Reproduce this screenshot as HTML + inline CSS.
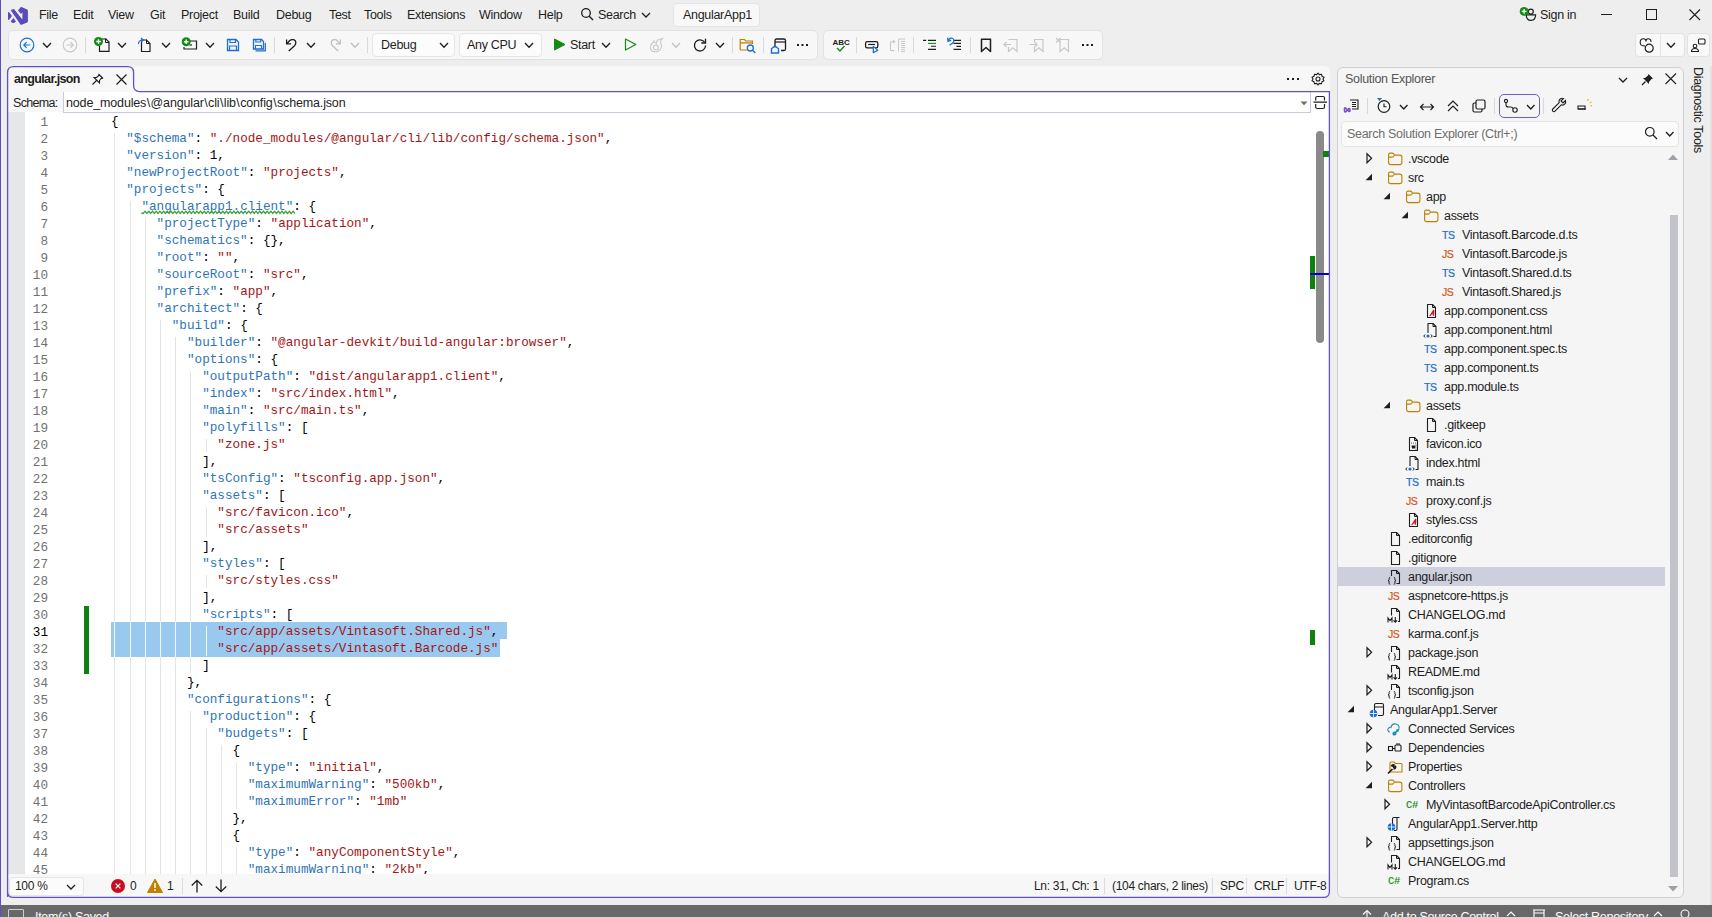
<!DOCTYPE html><html><head><meta charset="utf-8"><style>
*{box-sizing:border-box;margin:0;padding:0}
html,body{width:1712px;height:917px;overflow:hidden;background:#eeeeee;font-family:"Liberation Sans",sans-serif;color:#1e1e1e;position:relative}
.abs{position:absolute}
.t{position:absolute;white-space:pre;font-size:12.5px;line-height:16px;letter-spacing:-0.3px}
.k{color:#2e75b6}.s{color:#a31515}
.ln{position:absolute;text-align:right;font-family:"Liberation Mono",monospace;font-size:12.67px;line-height:17px;color:#717171;white-space:pre}
.cl{position:absolute;font-family:"Liberation Mono",monospace;font-size:12.67px;line-height:17px;white-space:pre;color:#000}
.tb{position:absolute;background:#f7f7f7;border:1px solid #e2e2e2;border-radius:5px}
svg{position:absolute;overflow:visible;z-index:4}
</style></head><body>

<svg style="left:0px;top:0px;width:30px;height:30px" viewBox="0 0 30 30"><path d="M10.6 10.0 L14.0 8.9 L22.3 19.5 L22.5 12.2 L21.0 14.0 L18.0 10.4 L21.0 6.8 L27.2 9.5 Q27.9 9.9 27.9 10.7 L27.9 21.5 Q27.9 22.2 27.2 22.5 L21.5 24.8 Q20.8 25 20.4 24.4 Z M8.0 12.3 L9.0 11.9 L11.9 16.0 L9.0 20.1 L8.0 19.8 Z M10.6 21.6 L13.4 17.9 L16.0 21.6 L13.9 22.9 L12.6 23 Z" fill="#5a4bbd"/></svg>
<div class="t" style="left:39px;top:7px">File</div>
<div class="t" style="left:73px;top:7px">Edit</div>
<div class="t" style="left:108px;top:7px">View</div>
<div class="t" style="left:150px;top:7px">Git</div>
<div class="t" style="left:181px;top:7px">Project</div>
<div class="t" style="left:233px;top:7px">Build</div>
<div class="t" style="left:276px;top:7px">Debug</div>
<div class="t" style="left:329px;top:7px">Test</div>
<div class="t" style="left:364px;top:7px">Tools</div>
<div class="t" style="left:407px;top:7px">Extensions</div>
<div class="t" style="left:479px;top:7px">Window</div>
<div class="t" style="left:538px;top:7px">Help</div>
<svg style="left:580px;top:7px;width:14px;height:14px" viewBox="0 0 14 14"><circle cx="6" cy="6" r="4.3" fill="none" stroke="#1e1e1e" stroke-width="1.3"/><path d="M9.2 9.2 L13 13" stroke="#1e1e1e" stroke-width="1.4"/></svg>
<div class="t" style="left:598px;top:7px">Search</div>
<svg style="left:641.0px;top:12.0px;width:10px;height:6px" viewBox="0 0 10 6"><path d="M1 1 L5.0 5 L9 1" fill="none" stroke="#1e1e1e" stroke-width="1.3"/></svg>
<div class="abs" style="left:673px;top:3px;width:87px;height:24px;background:#f8f8f8;border:1px solid #e4e4e4;border-radius:4px"></div>
<div class="t" style="left:683px;top:7px">AngularApp1</div>
<svg style="left:1518px;top:6px;width:20px;height:18px" viewBox="0 0 20 18"><circle cx="12.8" cy="5.6" r="2.5" fill="none" stroke="#1e1e1e" stroke-width="1.2"/><path d="M8.2 8.8 H17.6 C17.6 12.6 15.6 14.4 12.9 14.4 C10.2 14.4 8.2 12.6 8.2 8.8 Z" fill="none" stroke="#1e1e1e" stroke-width="1.2"/><circle cx="6.1" cy="5.4" r="4.4" fill="#138a13"/><path d="M6.1 3 V7.8 M3.7 5.4 H8.5" stroke="#fff" stroke-width="1.3"/></svg>
<div class="t" style="left:1540px;top:7px">Sign in</div>
<div class="abs" style="left:1601px;top:14px;width:11px;height:1px;background:#1e1e1e"></div>
<div class="abs" style="left:1646px;top:9px;width:11px;height:11px;border:1px solid #1e1e1e"></div>
<svg style="left:1689px;top:9px;width:12px;height:12px" viewBox="0 0 12 12"><path d="M0.5 0.5 L11 11 M11 0.5 L0.5 11" stroke="#1e1e1e" stroke-width="1.1"/></svg>
<div class="tb" style="left:8px;top:30px;width:810px;height:30px"></div>
<div class="tb" style="left:823px;top:30px;width:280px;height:30px"></div>
<svg style="left:19px;top:37px;width:16px;height:16px" viewBox="0 0 16 16"><circle cx="8" cy="8" r="6.8" fill="none" stroke="#1a6fd0" stroke-width="1.2"/><path d="M4.8 8 H11.2 M7.6 5.2 L4.8 8 L7.6 10.8" fill="none" stroke="#1a6fd0" stroke-width="1.2"/></svg>
<svg style="left:42.0px;top:42.4px;width:10px;height:6.2px" viewBox="0 0 10 6.2"><path d="M1 1 L5.0 5.2 L9 1" fill="none" stroke="#1e1e1e" stroke-width="1.3"/></svg>
<svg style="left:62px;top:37px;width:16px;height:16px" viewBox="0 0 16 16"><circle cx="8" cy="8" r="6.8" fill="none" stroke="#c9c9c9" stroke-width="1.2"/><path d="M4.8 8 H11.2 M8.4 5.2 L11.2 8 L8.4 10.8" fill="none" stroke="#c9c9c9" stroke-width="1.2"/></svg>
<div class="abs" style="left:85px;top:37px;width:1px;height:16px;background:#dadada"></div>
<svg style="left:93px;top:37px;width:18px;height:16px" viewBox="0 0 18 16"><path d="M6.5 2 H13 L16 5 V14.3 H6.5 V9" fill="none" stroke="#1e1e1e" stroke-width="1.2"/><path d="M12.5 1.5 V5.5 H16" fill="none" stroke="#1e1e1e" stroke-width="1"/><circle cx="5.5" cy="4.5" r="4.5" fill="#138a13"/><path d="M5.5 2.2 V6.8 M3.2 4.5 H7.8" stroke="#fff" stroke-width="1.4"/></svg>
<svg style="left:117.0px;top:42.4px;width:10px;height:6.2px" viewBox="0 0 10 6.2"><path d="M1 1 L5.0 5.2 L9 1" fill="none" stroke="#1e1e1e" stroke-width="1.3"/></svg>
<svg style="left:136px;top:37px;width:18px;height:16px" viewBox="0 0 18 16"><path d="M5.5 3 H10.5 L14 6.5 V14.5 H5.5 Z" fill="none" stroke="#1e1e1e" stroke-width="1.2"/><path d="M10.5 2.5 V6.5 H14" fill="none" stroke="#1e1e1e" stroke-width="1"/><path d="M2.5 7 C2.5 4 4 3 7 3 M5 1 L7.3 3 L5 5" fill="none" stroke="#1a6fd0" stroke-width="1.2"/></svg>
<svg style="left:161.0px;top:42.4px;width:10px;height:6.2px" viewBox="0 0 10 6.2"><path d="M1 1 L5.0 5.2 L9 1" fill="none" stroke="#1e1e1e" stroke-width="1.3"/></svg>
<svg style="left:180px;top:37px;width:20px;height:16px" viewBox="0 0 20 16"><path d="M8 4 H16.5 V12 H4 V10" fill="none" stroke="#1e1e1e" stroke-width="1.2"/><path d="M9.5 8 H12" stroke="#1e1e1e" stroke-width="1.2"/><circle cx="6.2" cy="4.7" r="4.5" fill="#138a13"/><path d="M6.2 2.4 V7 M3.9 4.7 H8.5" stroke="#fff" stroke-width="1.4"/></svg>
<svg style="left:205.0px;top:42.4px;width:10px;height:6.2px" viewBox="0 0 10 6.2"><path d="M1 1 L5.0 5.2 L9 1" fill="none" stroke="#1e1e1e" stroke-width="1.3"/></svg>
<svg style="left:226px;top:38px;width:14px;height:14px" viewBox="0 0 14 14"><path d="M1.5 1.5 H10 L12.5 4 V12.5 H1.5 Z" fill="none" stroke="#1a6fd0" stroke-width="1.3"/><path d="M4 1.5 V4.5 H9.5 V1.5 M3.5 12.5 V8 H10.5 V12.5" fill="none" stroke="#1a6fd0" stroke-width="1.2"/></svg>
<svg style="left:252px;top:38px;width:15px;height:14px" viewBox="0 0 15 14"><path d="M1.5 1.5 H9.5 L11.5 3.5 V11 H1.5 Z" fill="none" stroke="#1a6fd0" stroke-width="1.3"/><path d="M3.8 1.5 V4 H8.8 V1.5 M3.5 11 V7.5 H9.5 V11" fill="none" stroke="#1a6fd0" stroke-width="1.1"/><path d="M13.3 5 V12.8 H3.5" fill="none" stroke="#1a6fd0" stroke-width="1.2"/></svg>
<div class="abs" style="left:274px;top:37px;width:1px;height:16px;background:#dadada"></div>
<svg style="left:285px;top:38px;width:13px;height:13px" viewBox="0 0 13 13"><path d="M1.6 1.5 V5.9 H6" fill="none" stroke="#1e1e1e" stroke-width="1.3"/><path d="M1.8 5.8 L4.5 2.8 C6.5 0.8 10.8 1.2 10.8 4.8 C10.8 6.2 10.3 7 9.5 7.8 L3.8 13" fill="none" stroke="#1e1e1e" stroke-width="1.3"/></svg>
<svg style="left:306.0px;top:42.4px;width:10px;height:6.2px" viewBox="0 0 10 6.2"><path d="M1 1 L5.0 5.2 L9 1" fill="none" stroke="#1e1e1e" stroke-width="1.3"/></svg>
<svg style="left:329px;top:38px;width:13px;height:13px" viewBox="0 0 13 13"><path d="M11.4 1.5 V5.9 H7" fill="none" stroke="#bdbdbd" stroke-width="1.2"/><path d="M11.2 5.8 L8.5 2.8 C6.5 0.8 2.2 1.2 2.2 4.8 C2.2 6.2 2.7 7 3.5 7.8 L9.2 13" fill="none" stroke="#bdbdbd" stroke-width="1.2"/></svg>
<svg style="left:350.0px;top:42.4px;width:10px;height:6.2px" viewBox="0 0 10 6.2"><path d="M1 1 L5.0 5.2 L9 1" fill="none" stroke="#bdbdbd" stroke-width="1.3"/></svg>
<div class="abs" style="left:367px;top:37px;width:1px;height:16px;background:#dadada"></div>
<div class="abs" style="left:372px;top:33px;width:83px;height:24px;background:#fcfcfc;border:1px solid #e6e6e6;border-radius:4px"></div>
<div class="t" style="left:381px;top:37px">Debug</div>
<svg style="left:439.0px;top:42.4px;width:10px;height:6.2px" viewBox="0 0 10 6.2"><path d="M1 1 L5.0 5.2 L9 1" fill="none" stroke="#1e1e1e" stroke-width="1.3"/></svg>
<div class="abs" style="left:459px;top:33px;width:83px;height:24px;background:#fcfcfc;border:1px solid #e6e6e6;border-radius:4px"></div>
<div class="t" style="left:467px;top:37px">Any CPU</div>
<svg style="left:524.0px;top:42.4px;width:10px;height:6.2px" viewBox="0 0 10 6.2"><path d="M1 1 L5.0 5.2 L9 1" fill="none" stroke="#1e1e1e" stroke-width="1.3"/></svg>
<svg style="left:553px;top:38px;width:13px;height:13px" viewBox="0 0 13 13"><path d="M1.5 1 L12 6.5 L1.5 12 Z" fill="#138a13" stroke="#138a13" stroke-width="1" stroke-linejoin="round"/></svg>
<div class="t" style="left:570px;top:37px">Start</div>
<svg style="left:601.0px;top:42.4px;width:10px;height:6.2px" viewBox="0 0 10 6.2"><path d="M1 1 L5.0 5.2 L9 1" fill="none" stroke="#1e1e1e" stroke-width="1.3"/></svg>
<svg style="left:624px;top:38px;width:13px;height:13px" viewBox="0 0 13 13"><path d="M1.5 1 L11.8 6.5 L1.5 12 Z" fill="none" stroke="#138a13" stroke-width="1.2" stroke-linejoin="round"/></svg>
<svg style="left:649px;top:37px;width:16px;height:16px" viewBox="0 0 16 16"><path d="M13.5 1.5 C9 2 7 4 7.5 6.5 C5.5 5.5 5 4.5 5 4 C3 6 1.5 8 1.5 10.5 C1.5 13 3.5 14.8 6.5 14.8 C10 14.8 12.5 12 12.5 9 C12.5 6.5 10.5 5 12 3 Z" fill="none" stroke="#c8c8c8" stroke-width="1.1"/><circle cx="7" cy="10.5" r="2.5" fill="none" stroke="#c8c8c8" stroke-width="1.1"/></svg>
<svg style="left:671.0px;top:42.4px;width:10px;height:6.2px" viewBox="0 0 10 6.2"><path d="M1 1 L5.0 5.2 L9 1" fill="none" stroke="#c0c0c0" stroke-width="1.3"/></svg>
<svg style="left:692px;top:37px;width:16px;height:16px" viewBox="0 0 16 16"><path d="M12.8 5.5 A5.6 5.6 0 1 0 13.6 8.5" fill="none" stroke="#1e1e1e" stroke-width="1.3"/><path d="M13.5 1.8 V6 H9.3" fill="none" stroke="#1e1e1e" stroke-width="1.3"/></svg>
<svg style="left:715.0px;top:42.4px;width:10px;height:6.2px" viewBox="0 0 10 6.2"><path d="M1 1 L5.0 5.2 L9 1" fill="none" stroke="#1e1e1e" stroke-width="1.3"/></svg>
<div class="abs" style="left:732px;top:37px;width:1px;height:16px;background:#dadada"></div>
<svg style="left:739px;top:37px;width:18px;height:17px" viewBox="0 0 18 17"><path d="M1.2 13 V2.5 H5.5 L7 4 H13.5 V7" fill="none" stroke="#c08000" stroke-width="1.2"/><path d="M1.2 5.8 H13.5 M1.2 13 H8" fill="none" stroke="#c08000" stroke-width="1.2"/><circle cx="11.3" cy="11" r="3" fill="#f7f7f7" stroke="#1a6fd0" stroke-width="1.3"/><path d="M13.5 13.2 L16.3 16" stroke="#1a6fd0" stroke-width="1.4"/></svg>
<div class="abs" style="left:763px;top:37px;width:1px;height:16px;background:#dadada"></div>
<svg style="left:770px;top:37px;width:17px;height:17px" viewBox="0 0 17 17"><path d="M5 10.5 V3.5 C5 2.5 5.5 2 6.5 2 H14 C15 2 15.5 2.5 15.5 3.5 V12 C15.5 13 15 13.5 14 13.5 H11" fill="none" stroke="#1e1e1e" stroke-width="1.3"/><path d="M5 5 H15.5" stroke="#1e1e1e" stroke-width="1.2"/><path d="M1.5 16 V11.8 L5 9 L8.5 11.8 V16 Z" fill="none" stroke="#1a6fd0" stroke-width="1.4"/></svg>
<svg style="left:797px;top:44px;width:12px;height:3px" viewBox="0 0 12 3"><rect x="0" y="0" width="2" height="2" fill="#1e1e1e"/><rect x="4.5" y="0" width="2" height="2" fill="#1e1e1e"/><rect x="9" y="0" width="2" height="2" fill="#1e1e1e"/></svg>
<svg style="left:832px;top:37px;width:18px;height:16px" viewBox="0 0 18 16"><text x="0.5" y="7.5" font-family="Liberation Sans" font-weight="bold" font-size="8" fill="#1e1e1e">ABC</text><path d="M5 11 L8 14 L12.5 9" fill="none" stroke="#138a13" stroke-width="1.4"/></svg>
<div class="abs" style="left:856px;top:37px;width:1px;height:16px;background:#dadada"></div>
<svg style="left:860px;top:34px;width:50px;height:22px" viewBox="0 0 50 22"><rect x="5.6" y="7.6" width="12.2" height="6.2" rx="1.6" fill="none" stroke="#1e1e1e" stroke-width="1.3"/><path d="M8.2 10.5 H15" stroke="#1e1e1e" stroke-width="1.2"/><path d="M13.3 12.4 V18.6 L17.8 16.2 Z" fill="#f7f7f7" stroke="#1a6fd0" stroke-width="1.2" stroke-linejoin="round"/><path d="M30.5 7.8 H34.5 M33 6.2 L34.8 7.8 L33 9.4 M30.5 7.8 V15.8 Q30.5 16.6 31.3 16.6 H34.5" fill="none" stroke="#c8c8c8" stroke-width="1.1"/><path d="M38.5 17.6 V5 H45 M41 7.4 H45 M41 9.4 H45 M41 11.5 H45 M41 13.6 H45 M41 15.7 H45 M41 17.7 H45" fill="none" stroke="#c8c8c8" stroke-width="1"/></svg>
<div class="abs" style="left:913px;top:37px;width:1px;height:16px;background:#dadada"></div>
<svg style="left:920px;top:36px;width:45px;height:18px" viewBox="0 0 45 18"><path d="M3 4.4 H6.2 M8 4.4 H16 M11 10.3 H16 M8 13.4 H16" stroke="#1e1e1e" stroke-width="1.1"/><path d="M8 7.4 H16" stroke="#138a13" stroke-width="1.1"/><path d="M33.5 4.4 H41 M33.5 7.4 H41 M36.5 10.4 H41 M33.5 13.4 H41" stroke="#1e1e1e" stroke-width="1.1"/><path d="M27.6 1.6 L27.9 5.2 L31.2 4.4 M28 5 C29 2.6 30.5 1.8 32 2.2 C34.5 3 34.2 5.5 33 6.8 L29.6 9.2" fill="none" stroke="#1a6fd0" stroke-width="1.2"/></svg>
<div class="abs" style="left:970px;top:37px;width:1px;height:16px;background:#dadada"></div>
<svg style="left:980px;top:38px;width:12px;height:15px" viewBox="0 0 12 15"><path d="M1.5 1.2 H10.5 V13.5 L6 9.5 L1.5 13.5 Z" fill="none" stroke="#1e1e1e" stroke-width="1.5" stroke-linejoin="round"/></svg>
<svg style="left:1003px;top:38px;width:16px;height:15px" viewBox="0 0 16 15"><path d="M5.5 1.5 H14 V13.5 L9.8 9.8 L5.5 13.5 V9" fill="none" stroke="#c8c8c8" stroke-width="1.2"/><path d="M1 6.5 H8 M3.5 4 L1 6.5 L3.5 9" fill="none" stroke="#c8c8c8" stroke-width="1.2"/></svg>
<svg style="left:1029px;top:38px;width:16px;height:15px" viewBox="0 0 16 15"><path d="M5.5 4 V1.5 H14 V13.5 L9.8 9.8 L5.5 13.5 V9" fill="none" stroke="#c8c8c8" stroke-width="1.2"/><path d="M0.5 6.5 H8 M5.5 4 L8 6.5 L5.5 9" fill="none" stroke="#c8c8c8" stroke-width="1.2"/></svg>
<svg style="left:1055px;top:37px;width:16px;height:16px" viewBox="0 0 16 16"><path d="M5 2.5 H13.5 V14.5 L9.3 10.8 L5 14.5 Z" fill="none" stroke="#c8c8c8" stroke-width="1.2"/><path d="M1 1 L5.5 5.5 M5.5 1 L1 5.5" stroke="#c8c8c8" stroke-width="1.2"/></svg>
<svg style="left:1082px;top:44px;width:12px;height:3px" viewBox="0 0 12 3"><rect x="0" y="0" width="2" height="2" fill="#1e1e1e"/><rect x="4.5" y="0" width="2" height="2" fill="#1e1e1e"/><rect x="9" y="0" width="2" height="2" fill="#1e1e1e"/></svg>
<div class="tb" style="left:1635px;top:33px;width:50px;height:24px;background:#f9f9f9;border-radius:4px"></div>
<div class="abs" style="left:1660px;top:34px;width:1px;height:22px;background:#e4e4e4"></div>
<svg style="left:1638px;top:37px;width:18px;height:17px" viewBox="0 0 18 17"><path d="M7 9 C3 9 2.2 7.8 2.2 5.5 C2.2 3.2 3.5 1.8 5.5 1.8 C7 1.8 8 2.8 8 4.5 M8 4 C8 2.5 9 1.8 10.2 1.8 C12 1.8 13 3 13 5" fill="none" stroke="#1e1e1e" stroke-width="1.1"/><circle cx="11.2" cy="11.2" r="4" fill="#f9f9f9" stroke="#1e1e1e" stroke-width="1.2"/></svg>
<svg style="left:1666.0px;top:42.4px;width:10px;height:6.2px" viewBox="0 0 10 6.2"><path d="M1 1 L5.0 5.2 L9 1" fill="none" stroke="#1e1e1e" stroke-width="1.3"/></svg>
<div class="tb" style="left:1687px;top:33px;width:23px;height:24px;background:#f9f9f9;border-radius:4px"></div>
<svg style="left:1690px;top:37px;width:17px;height:16px" viewBox="0 0 17 16"><rect x="8.5" y="2" width="6.5" height="5" rx="1" fill="none" stroke="#1e1e1e" stroke-width="1.1"/><circle cx="5" cy="9" r="1.8" fill="none" stroke="#1e1e1e" stroke-width="1.1"/><path d="M1.5 14.5 C1.5 12 3 11.5 5 11.5 C7 11.5 8.5 12 8.5 14.5 Z" fill="none" stroke="#1e1e1e" stroke-width="1.1"/></svg>
<div class="abs" style="left:7px;top:66px;width:1323px;height:832px;background:#f7f7f7;border-radius:6px"></div>
<div class="abs" style="left:7px;top:66px;width:127px;height:27px;background:#f7f7f7;border-radius:6px 6px 0 0"></div>
<svg style="left:0;top:0;width:1712px;height:917px;z-index:5;pointer-events:none" viewBox="0 0 1712 917"><path d="M7.6 897 V72.5 Q7.6 66.6 13.5 66.6 H127.7 Q133.6 66.6 133.6 72.5 V85.6 Q133.6 91.6 139.6 91.6 H1329.4 V891.5 Q1329.4 897.4 1323.5 897.4 H13.5 Q7.6 897.4 7.6 891.5" fill="none" stroke="#5f53c4" stroke-width="1.3"/></svg>
<div class="t" style="left:14px;top:71px;font-weight:bold;letter-spacing:-0.65px;z-index:4">angular.json</div>
<svg style="left:91px;top:73px;width:13px;height:13px" viewBox="0 0 13 13"><path d="M7.5 1 L12 5.5 M8.5 2 L5.5 4.5 L3 4.5 L8.5 10 L8.5 7.5 L11 4.5 M5.5 7.5 L1.5 11.5" fill="none" stroke="#1e1e1e" stroke-width="1.1"/></svg>
<svg style="left:116px;top:74px;width:11px;height:11px" viewBox="0 0 11 11"><path d="M0.5 0.5 L10.5 10.5 M10.5 0.5 L0.5 10.5" stroke="#1e1e1e" stroke-width="1.2"/></svg>
<svg style="left:1287px;top:78px;width:13px;height:3px" viewBox="0 0 13 3"><rect x="0" y="0" width="2" height="2" fill="#1e1e1e"/><rect x="5" y="0" width="2" height="2" fill="#1e1e1e"/><rect x="10" y="0" width="2" height="2" fill="#1e1e1e"/></svg>
<svg style="left:1311px;top:72px;width:14px;height:14px" viewBox="0 0 14 14"><path d="M7 1 L8.3 2.6 L10.5 2.2 L11 4.3 L13 5.3 L12 7 L13 8.7 L11 9.7 L10.5 11.8 L8.3 11.4 L7 13 L5.7 11.4 L3.5 11.8 L3 9.7 L1 8.7 L2 7 L1 5.3 L3 4.3 L3.5 2.2 L5.7 2.6 Z" fill="none" stroke="#1e1e1e" stroke-width="1.1" stroke-linejoin="round"/><circle cx="7" cy="7" r="2" fill="none" stroke="#1e1e1e" stroke-width="1.1"/></svg>
<div class="abs" style="left:8px;top:92px;width:1321px;height:21px;background:#f7f7f7"></div>
<div class="abs" style="left:1310px;top:92px;width:19px;height:21px;background:#ffffff"></div>
<div class="t" style="left:13px;top:95px;letter-spacing:-0.7px">Schema:</div>
<div class="abs" style="left:63px;top:92px;width:1247.5px;height:21px;background:#fff;border:1px solid #c9cadb;border-top:none;z-index:2"></div>
<div class="t" style="left:66px;top:95px;letter-spacing:-0.15px;z-index:3">node_modules<span style="margin:0 0.5px">\</span>@angular<span style="margin:0 0.5px">\</span>cli<span style="margin:0 0.5px">\</span>lib<span style="margin:0 0.5px">\</span>config<span style="margin:0 0.5px">\</span>schema.json</div>
<svg style="left:1300px;top:101px;width:8px;height:5px" viewBox="0 0 8 5"><path d="M0.5 0.5 H7.5 L4 4.2 Z" fill="#6e6e6e"/></svg>
<svg style="left:1313px;top:95px;width:15px;height:15px" viewBox="0 0 15 15"><path d="M2.7 5.5 V3 C2.7 2 3.2 1.5 4.2 1.5 H10 C11 1.5 11.5 2 11.5 3 V5.5 M2.7 9 V12 C2.7 13 3.2 13.5 4.2 13.5 H10 C11 13.5 11.5 13 11.5 12 V9 M0.5 7.2 H14" fill="none" stroke="#1e1e1e" stroke-width="1.2"/></svg>
<div class="abs" style="left:8px;top:112px;width:1321px;height:762px;background:#ffffff;overflow:hidden">
<div class="abs" style="left:0;top:0;width:17px;height:762px;background:#e6e7e8"></div>
<div class="abs" style="left:103.0px;top:510px;width:396.2px;height:17px;background:#99c9ef"></div>
<div class="abs" style="left:103.0px;top:527px;width:388.6px;height:18px;background:#99c9ef"></div>
<div class="abs" style="left:106.3px;top:21px;width:1px;height:489px;background:#e4e4e4"></div>
<div class="abs" style="left:106.3px;top:510px;width:1px;height:35px;background:#f4f8fc"></div>
<div class="abs" style="left:106.3px;top:545px;width:1px;height:217px;background:#e4e4e4"></div>
<div class="abs" style="left:121.5px;top:89px;width:1px;height:421px;background:#e4e4e4"></div>
<div class="abs" style="left:121.5px;top:510px;width:1px;height:35px;background:#f4f8fc"></div>
<div class="abs" style="left:121.5px;top:545px;width:1px;height:217px;background:#e4e4e4"></div>
<div class="abs" style="left:136.7px;top:106px;width:1px;height:404px;background:#e4e4e4"></div>
<div class="abs" style="left:136.7px;top:510px;width:1px;height:35px;background:#f4f8fc"></div>
<div class="abs" style="left:136.7px;top:545px;width:1px;height:217px;background:#e4e4e4"></div>
<div class="abs" style="left:151.9px;top:208px;width:1px;height:302px;background:#e4e4e4"></div>
<div class="abs" style="left:151.9px;top:510px;width:1px;height:35px;background:#f4f8fc"></div>
<div class="abs" style="left:151.9px;top:545px;width:1px;height:217px;background:#e4e4e4"></div>
<div class="abs" style="left:167.1px;top:225px;width:1px;height:285px;background:#e4e4e4"></div>
<div class="abs" style="left:167.1px;top:510px;width:1px;height:35px;background:#f4f8fc"></div>
<div class="abs" style="left:167.1px;top:545px;width:1px;height:217px;background:#e4e4e4"></div>
<div class="abs" style="left:182.3px;top:259px;width:1px;height:251px;background:#e4e4e4"></div>
<div class="abs" style="left:182.3px;top:510px;width:1px;height:35px;background:#f4f8fc"></div>
<div class="abs" style="left:182.3px;top:545px;width:1px;height:16px;background:#e4e4e4"></div>
<div class="abs" style="left:182.3px;top:599px;width:1px;height:163px;background:#e4e4e4"></div>
<div class="abs" style="left:197.5px;top:327px;width:1px;height:13px;background:#e4e4e4"></div>
<div class="abs" style="left:197.5px;top:395px;width:1px;height:30px;background:#e4e4e4"></div>
<div class="abs" style="left:197.5px;top:463px;width:1px;height:13px;background:#e4e4e4"></div>
<div class="abs" style="left:197.5px;top:514px;width:1px;height:30px;background:#f4f8fc"></div>
<div class="abs" style="left:197.5px;top:616px;width:1px;height:146px;background:#e4e4e4"></div>
<div class="abs" style="left:212.7px;top:633px;width:1px;height:129px;background:#e4e4e4"></div>
<div class="abs" style="left:227.9px;top:650px;width:1px;height:47px;background:#e4e4e4"></div>
<div class="abs" style="left:227.9px;top:735px;width:1px;height:27px;background:#e4e4e4"></div>
<div class="abs" style="left:76px;top:494px;width:5px;height:68px;background:#108010"></div>
<div class="ln" style="top:2px;left:-10px;width:50px">1</div>
<div class="cl" style="top:1px;left:103.0px">{</div>
<div class="ln" style="top:19px;left:-10px;width:50px">2</div>
<div class="cl" style="top:18px;left:103.0px">  <span class="k">&quot;$schema&quot;</span>: <span class="s">&quot;./node_modules/@angular/cli/lib/config/schema.json&quot;</span>,</div>
<div class="ln" style="top:36px;left:-10px;width:50px">3</div>
<div class="cl" style="top:35px;left:103.0px">  <span class="k">&quot;version&quot;</span>: 1,</div>
<div class="ln" style="top:53px;left:-10px;width:50px">4</div>
<div class="cl" style="top:52px;left:103.0px">  <span class="k">&quot;newProjectRoot&quot;</span>: <span class="s">&quot;projects&quot;</span>,</div>
<div class="ln" style="top:70px;left:-10px;width:50px">5</div>
<div class="cl" style="top:69px;left:103.0px">  <span class="k">&quot;projects&quot;</span>: {</div>
<div class="ln" style="top:87px;left:-10px;width:50px">6</div>
<div class="cl" style="top:86px;left:103.0px">    <span class="k">&quot;angularapp1.client&quot;</span>: {</div>
<div class="ln" style="top:104px;left:-10px;width:50px">7</div>
<div class="cl" style="top:103px;left:103.0px">      <span class="k">&quot;projectType&quot;</span>: <span class="s">&quot;application&quot;</span>,</div>
<div class="ln" style="top:121px;left:-10px;width:50px">8</div>
<div class="cl" style="top:120px;left:103.0px">      <span class="k">&quot;schematics&quot;</span>: {},</div>
<div class="ln" style="top:138px;left:-10px;width:50px">9</div>
<div class="cl" style="top:137px;left:103.0px">      <span class="k">&quot;root&quot;</span>: <span class="s">&quot;&quot;</span>,</div>
<div class="ln" style="top:155px;left:-10px;width:50px">10</div>
<div class="cl" style="top:154px;left:103.0px">      <span class="k">&quot;sourceRoot&quot;</span>: <span class="s">&quot;src&quot;</span>,</div>
<div class="ln" style="top:172px;left:-10px;width:50px">11</div>
<div class="cl" style="top:171px;left:103.0px">      <span class="k">&quot;prefix&quot;</span>: <span class="s">&quot;app&quot;</span>,</div>
<div class="ln" style="top:189px;left:-10px;width:50px">12</div>
<div class="cl" style="top:188px;left:103.0px">      <span class="k">&quot;architect&quot;</span>: {</div>
<div class="ln" style="top:206px;left:-10px;width:50px">13</div>
<div class="cl" style="top:205px;left:103.0px">        <span class="k">&quot;build&quot;</span>: {</div>
<div class="ln" style="top:223px;left:-10px;width:50px">14</div>
<div class="cl" style="top:222px;left:103.0px">          <span class="k">&quot;builder&quot;</span>: <span class="s">&quot;@angular-devkit/build-angular:browser&quot;</span>,</div>
<div class="ln" style="top:240px;left:-10px;width:50px">15</div>
<div class="cl" style="top:239px;left:103.0px">          <span class="k">&quot;options&quot;</span>: {</div>
<div class="ln" style="top:257px;left:-10px;width:50px">16</div>
<div class="cl" style="top:256px;left:103.0px">            <span class="k">&quot;outputPath&quot;</span>: <span class="s">&quot;dist/angularapp1.client&quot;</span>,</div>
<div class="ln" style="top:274px;left:-10px;width:50px">17</div>
<div class="cl" style="top:273px;left:103.0px">            <span class="k">&quot;index&quot;</span>: <span class="s">&quot;src/index.html&quot;</span>,</div>
<div class="ln" style="top:291px;left:-10px;width:50px">18</div>
<div class="cl" style="top:290px;left:103.0px">            <span class="k">&quot;main&quot;</span>: <span class="s">&quot;src/main.ts&quot;</span>,</div>
<div class="ln" style="top:308px;left:-10px;width:50px">19</div>
<div class="cl" style="top:307px;left:103.0px">            <span class="k">&quot;polyfills&quot;</span>: [</div>
<div class="ln" style="top:325px;left:-10px;width:50px">20</div>
<div class="cl" style="top:324px;left:103.0px">              <span class="s">&quot;zone.js&quot;</span></div>
<div class="ln" style="top:342px;left:-10px;width:50px">21</div>
<div class="cl" style="top:341px;left:103.0px">            ],</div>
<div class="ln" style="top:359px;left:-10px;width:50px">22</div>
<div class="cl" style="top:358px;left:103.0px">            <span class="k">&quot;tsConfig&quot;</span>: <span class="s">&quot;tsconfig.app.json&quot;</span>,</div>
<div class="ln" style="top:376px;left:-10px;width:50px">23</div>
<div class="cl" style="top:375px;left:103.0px">            <span class="k">&quot;assets&quot;</span>: [</div>
<div class="ln" style="top:393px;left:-10px;width:50px">24</div>
<div class="cl" style="top:392px;left:103.0px">              <span class="s">&quot;src/favicon.ico&quot;</span>,</div>
<div class="ln" style="top:410px;left:-10px;width:50px">25</div>
<div class="cl" style="top:409px;left:103.0px">              <span class="s">&quot;src/assets&quot;</span></div>
<div class="ln" style="top:427px;left:-10px;width:50px">26</div>
<div class="cl" style="top:426px;left:103.0px">            ],</div>
<div class="ln" style="top:444px;left:-10px;width:50px">27</div>
<div class="cl" style="top:443px;left:103.0px">            <span class="k">&quot;styles&quot;</span>: [</div>
<div class="ln" style="top:461px;left:-10px;width:50px">28</div>
<div class="cl" style="top:460px;left:103.0px">              <span class="s">&quot;src/styles.css&quot;</span></div>
<div class="ln" style="top:478px;left:-10px;width:50px">29</div>
<div class="cl" style="top:477px;left:103.0px">            ],</div>
<div class="ln" style="top:495px;left:-10px;width:50px">30</div>
<div class="cl" style="top:494px;left:103.0px">            <span class="k">&quot;scripts&quot;</span>: [</div>
<div class="ln" style="top:512px;left:-10px;width:50px;color:#000">31</div>
<div class="cl" style="top:511px;left:103.0px">              <span class="s">&quot;src/app/assets/Vintasoft.Shared.js&quot;</span>,</div>
<div class="ln" style="top:529px;left:-10px;width:50px">32</div>
<div class="cl" style="top:528px;left:103.0px">              <span class="s">&quot;src/app/assets/Vintasoft.Barcode.js&quot;</span></div>
<div class="ln" style="top:546px;left:-10px;width:50px">33</div>
<div class="cl" style="top:545px;left:103.0px">            ]</div>
<div class="ln" style="top:563px;left:-10px;width:50px">34</div>
<div class="cl" style="top:562px;left:103.0px">          },</div>
<div class="ln" style="top:580px;left:-10px;width:50px">35</div>
<div class="cl" style="top:579px;left:103.0px">          <span class="k">&quot;configurations&quot;</span>: {</div>
<div class="ln" style="top:597px;left:-10px;width:50px">36</div>
<div class="cl" style="top:596px;left:103.0px">            <span class="k">&quot;production&quot;</span>: {</div>
<div class="ln" style="top:614px;left:-10px;width:50px">37</div>
<div class="cl" style="top:613px;left:103.0px">              <span class="k">&quot;budgets&quot;</span>: [</div>
<div class="ln" style="top:631px;left:-10px;width:50px">38</div>
<div class="cl" style="top:630px;left:103.0px">                {</div>
<div class="ln" style="top:648px;left:-10px;width:50px">39</div>
<div class="cl" style="top:647px;left:103.0px">                  <span class="k">&quot;type&quot;</span>: <span class="s">&quot;initial&quot;</span>,</div>
<div class="ln" style="top:665px;left:-10px;width:50px">40</div>
<div class="cl" style="top:664px;left:103.0px">                  <span class="k">&quot;maximumWarning&quot;</span>: <span class="s">&quot;500kb&quot;</span>,</div>
<div class="ln" style="top:682px;left:-10px;width:50px">41</div>
<div class="cl" style="top:681px;left:103.0px">                  <span class="k">&quot;maximumError&quot;</span>: <span class="s">&quot;1mb&quot;</span></div>
<div class="ln" style="top:699px;left:-10px;width:50px">42</div>
<div class="cl" style="top:698px;left:103.0px">                },</div>
<div class="ln" style="top:716px;left:-10px;width:50px">43</div>
<div class="cl" style="top:715px;left:103.0px">                {</div>
<div class="ln" style="top:733px;left:-10px;width:50px">44</div>
<div class="cl" style="top:732px;left:103.0px">                  <span class="k">&quot;type&quot;</span>: <span class="s">&quot;anyComponentStyle&quot;</span>,</div>
<div class="ln" style="top:750px;left:-10px;width:50px">45</div>
<div class="cl" style="top:749px;left:103.0px">                  <span class="k">&quot;maximumWarning&quot;</span>: <span class="s">&quot;2kb&quot;</span>,</div>
<svg style="left:0;top:0;width:600px;height:200px" viewBox="0 0 600 200"><path d="M133.4 101.0 L135.2 101.5 L137.1 99.2 L138.9 101.5 L140.8 99.2 L142.6 101.5 L144.5 99.2 L146.3 101.5 L148.2 99.2 L150.0 101.5 L151.9 99.2 L153.7 101.5 L155.6 99.2 L157.4 101.5 L159.3 99.2 L161.1 101.5 L163.0 99.2 L164.8 101.5 L166.7 99.2 L168.5 101.5 L170.4 99.2 L172.2 101.5 L174.1 99.2 L175.9 101.5 L177.8 99.2 L179.6 101.5 L181.5 99.2 L183.3 101.5 L185.2 99.2 L187.0 101.5 L188.9 99.2 L190.7 101.5 L192.6 99.2 L194.4 101.5 L196.3 99.2 L198.1 101.5 L200.0 99.2 L201.8 101.5 L203.7 99.2 L205.5 101.5 L207.4 99.2 L209.2 101.5 L211.1 99.2 L212.9 101.5 L214.8 99.2 L216.6 101.5 L218.5 99.2 L220.3 101.5 L222.2 99.2 L224.0 101.5 L225.9 99.2 L227.7 101.5 L229.6 99.2 L231.4 101.5 L233.3 99.2 L235.1 101.5 L237.0 99.2 L238.8 101.5 L240.7 99.2 L242.5 101.5 L244.4 99.2 L246.2 101.5 L248.1 99.2 L249.9 101.5 L251.8 99.2 L253.6 101.5 L255.5 99.2 L257.3 101.5 L259.2 99.2 L261.0 101.5 L262.9 99.2 L264.7 101.5 L266.6 99.2 L268.4 101.5 L270.3 99.2 L272.1 101.5 L274.0 99.2 L275.8 101.5 L277.7 99.2 L279.5 101.5 L281.4 99.2 L283.2 101.5 L285.1 99.2 L286.9 101.5" fill="none" stroke="#36a036" stroke-width="1.3"/></svg>
<div class="abs" style="left:1308px;top:19px;width:8px;height:212px;background:#8a8a8a;border-radius:4px"></div>
<div class="abs" style="left:1315px;top:39px;width:6px;height:6px;background:#108010"></div>
<div class="abs" style="left:1302px;top:144px;width:5px;height:33px;background:#108010"></div>
<div class="abs" style="left:1302px;top:161px;width:20px;height:2px;background:#0000c8"></div>
<div class="abs" style="left:1302px;top:518px;width:5px;height:15px;background:#108010"></div>
</div>
<div class="abs" style="left:8.5px;top:874px;width:1320px;height:22.5px;background:#f7f7f7;border-radius:0 0 5px 5px"></div>
<div class="abs" style="left:9px;top:877px;width:75px;height:19px;background:#fbfbfb;border:1px solid #e6e6e6;border-radius:3px"></div>
<div class="t" style="left:15px;top:878px;font-size:12px">100 %</div>
<svg style="left:65.5px;top:883.5px;width:10px;height:6px" viewBox="0 0 10 6"><path d="M1 1 L5.0 5 L9 1" fill="none" stroke="#1e1e1e" stroke-width="1.3"/></svg>
<svg style="left:110px;top:878px;width:16px;height:16px" viewBox="0 0 16 16"><circle cx="8" cy="8" r="7" fill="#c50f1f"/><path d="M5.6 5.6 L10.4 10.4 M10.4 5.6 L5.6 10.4" stroke="#fff" stroke-width="1.2"/></svg>
<div class="t" style="left:130px;top:878px;font-size:12px">0</div>
<svg style="left:147px;top:878px;width:16px;height:15px" viewBox="0 0 16 15"><path d="M8 1 L15.5 14.5 H0.5 Z" fill="#c08000" stroke="#c08000" stroke-width="1" stroke-linejoin="round"/><path d="M8 5 V10" stroke="#fff" stroke-width="1.5"/><circle cx="8" cy="12" r="0.9" fill="#fff"/></svg>
<div class="t" style="left:167px;top:878px;font-size:12px">1</div>
<div class="abs" style="left:182px;top:878px;width:1px;height:16px;background:#dcdcdc"></div>
<svg style="left:190px;top:879px;width:14px;height:14px" viewBox="0 0 14 14"><path d="M7 13.5 V1.5 M1.8 6.5 L7 1.3 L12.2 6.5" fill="none" stroke="#1e1e1e" stroke-width="1.3"/></svg>
<svg style="left:214px;top:879px;width:14px;height:14px" viewBox="0 0 14 14"><path d="M7 0.5 V12.5 M1.8 7.5 L7 12.7 L12.2 7.5" fill="none" stroke="#1e1e1e" stroke-width="1.3"/></svg>
<div class="t" style="left:1034px;top:878px;font-size:12px">Ln: 31, Ch: 1</div>
<div class="abs" style="left:1104px;top:878px;width:1px;height:16px;background:#dcdcdc"></div>
<div class="t" style="left:1112px;top:878px;font-size:12px">(104 chars, 2 lines)</div>
<div class="abs" style="left:1212px;top:878px;width:1px;height:16px;background:#dcdcdc"></div>
<div class="t" style="left:1220px;top:878px;font-size:12px">SPC</div>
<div class="abs" style="left:1246px;top:878px;width:1px;height:16px;background:#dcdcdc"></div>
<div class="t" style="left:1254px;top:878px;font-size:12px">CRLF</div>
<div class="abs" style="left:1286px;top:878px;width:1px;height:16px;background:#dcdcdc"></div>
<div class="t" style="left:1294px;top:878px;font-size:12px">UTF-8</div>
<div class="abs" style="left:1336.5px;top:66.5px;width:347.5px;height:831.5px;background:#f5f5f5;border:1px solid #d0d0d0;border-radius:6px"></div>
<div class="t" style="left:1345px;top:71px;color:#555">Solution Explorer</div>
<svg style="left:1618.0px;top:76.5px;width:10px;height:6px" viewBox="0 0 10 6"><path d="M1 1 L5.0 5 L9 1" fill="none" stroke="#1e1e1e" stroke-width="1.3"/></svg>
<svg style="left:1641px;top:73px;width:13px;height:13px" viewBox="0 0 13 13"><path d="M7.5 1 L12 5.5 L10.5 6 L8 9 L8 11 L2 5 L4 5 L7 2.5 Z" fill="#1e1e1e"/><path d="M4.5 8.5 L1 12" stroke="#1e1e1e" stroke-width="1.2"/></svg>
<svg style="left:1665px;top:73px;width:12px;height:12px" viewBox="0 0 12 12"><path d="M0.5 0.5 L11 11 M11 0.5 L0.5 11" stroke="#1e1e1e" stroke-width="1.1"/></svg>
<svg style="left:1343px;top:98px;width:18px;height:17px" viewBox="0 0 18 17"><path d="M7 2 H15 V11 H9" fill="none" stroke="#1e1e1e" stroke-width="1.1"/><path d="M9 4.5 H13 M9 6.5 H13 M9 8.5 H13" stroke="#1e1e1e" stroke-width="1"/><path d="M1.5 10.5 C1.5 9.5 2.5 9.5 3.5 11 L5 12.5 C6 14 7 14 7 12 C7 10 6 10 5 11.5 L3.5 13 C2.5 14.5 1.5 14.5 1.5 12.5 Z" fill="none" stroke="#7a4fd0" stroke-width="1.6"/></svg>
<div class="abs" style="left:1367px;top:98px;width:1px;height:16px;background:#d8d8d8"></div>
<svg style="left:1375px;top:97px;width:17px;height:17px" viewBox="0 0 17 17"><circle cx="9" cy="9.5" r="5.8" fill="none" stroke="#1e1e1e" stroke-width="1.2"/><path d="M9 6.5 V9.8 H11.5" fill="none" stroke="#1e1e1e" stroke-width="1.1"/><path d="M2 1 H7 L4.5 4 Z" fill="#1a6fd0"/></svg>
<svg style="left:1399.25px;top:103.5px;width:9.5px;height:6px" viewBox="0 0 9.5 6"><path d="M1 1 L4.75 5 L8.5 1" fill="none" stroke="#1e1e1e" stroke-width="1.3"/></svg>
<svg style="left:1419px;top:101.5px;width:16px;height:10px" viewBox="0 0 16 10"><path d="M1.5 5 H14.5 M4.5 2 L1.5 5 L4.5 8 M11.5 2 L14.5 5 L11.5 8" fill="none" stroke="#1e1e1e" stroke-width="1.2"/></svg>
<svg style="left:1446px;top:99px;width:14px;height:14px" viewBox="0 0 14 14"><path d="M2 7 L7 2 L12 7 M2 12 L7 7 L12 12" fill="none" stroke="#1e1e1e" stroke-width="1.2"/></svg>
<svg style="left:1471px;top:98px;width:16px;height:16px" viewBox="0 0 16 16"><rect x="5" y="2" width="9" height="9" rx="1.5" fill="none" stroke="#1e1e1e" stroke-width="1.2"/><path d="M5 5 H3.5 C2.5 5 2 5.5 2 6.5 V12.5 C2 13.5 2.5 14 3.5 14 H9.5 C10.5 14 11 13.5 11 12.5 V11" fill="none" stroke="#1e1e1e" stroke-width="1.2"/></svg>
<div class="abs" style="left:1494px;top:98px;width:1px;height:16px;background:#d8d8d8"></div>
<div class="abs" style="left:1498.5px;top:94px;width:41.5px;height:24px;border:1.5px solid #6b5fc7;border-radius:5px"></div>
<svg style="left:1503px;top:98px;width:16px;height:16px" viewBox="0 0 16 16"><circle cx="3" cy="3" r="1.6" fill="none" stroke="#1e1e1e" stroke-width="1.1"/><circle cx="12" cy="12" r="2.2" fill="none" stroke="#1e1e1e" stroke-width="1.1"/><path d="M3 4.6 V7 C3 8.5 4 9 5.5 9 H7.5 C9 9 9.8 9.8 10 10.5" fill="none" stroke="#1e1e1e" stroke-width="1.1"/></svg>
<svg style="left:1526.25px;top:103.5px;width:9.5px;height:6px" viewBox="0 0 9.5 6"><path d="M1 1 L4.75 5 L8.5 1" fill="none" stroke="#1e1e1e" stroke-width="1.3"/></svg>
<div class="abs" style="left:1543px;top:98px;width:1px;height:16px;background:#d8d8d8"></div>
<svg style="left:1551px;top:97px;width:16px;height:16px" viewBox="0 0 16 16"><path d="M14.5 3.5 L12 6 L10 4 L12.5 1.5 C10.5 0.8 8 2 8 4.5 C8 5 8.1 5.4 8.2 5.7 L1.8 12 C1.2 12.6 1.2 13.6 1.8 14.2 C2.4 14.8 3.4 14.8 4 14.2 L10.3 7.8 C12.8 8.8 15.5 6.5 14.5 3.5 Z" fill="none" stroke="#1e1e1e" stroke-width="1.1"/></svg>
<svg style="left:1576px;top:97px;width:18px;height:16px" viewBox="0 0 18 16"><path d="M2 9 H9 V12 H2 Z" fill="none" stroke="#1e1e1e" stroke-width="1.1"/><path d="M2 12 H10" stroke="#1e1e1e" stroke-width="1.2"/><path d="M12 2 V4 M15.5 5 L13.8 6 M14.5 8.5 L16 9" stroke="#e0a000" stroke-width="1"/></svg>
<div class="abs" style="left:1341px;top:121px;width:338px;height:26px;background:#fbfbfb;border:1px solid #e4e4e4;border-radius:4px"></div>
<div class="t" style="left:1347px;top:126px;color:#6e6e6e">Search Solution Explorer (Ctrl+;)</div>
<svg style="left:1644px;top:126px;width:14px;height:14px" viewBox="0 0 14 14"><circle cx="5.8" cy="5.8" r="4.3" fill="none" stroke="#1e1e1e" stroke-width="1.2"/><path d="M9 9 L13 13" stroke="#1e1e1e" stroke-width="1.3"/></svg>
<svg style="left:1665.25px;top:131.0px;width:9.5px;height:6px" viewBox="0 0 9.5 6"><path d="M1 1 L4.75 5 L8.5 1" fill="none" stroke="#1e1e1e" stroke-width="1.3"/></svg>
<svg style="left:1667px;top:153px;width:12px;height:8px" viewBox="0 0 12 8"><path d="M1 7 L6 1.5 L11 7 Z" fill="#a0a0a8"/></svg>
<svg style="left:1667px;top:885px;width:12px;height:8px" viewBox="0 0 12 8"><path d="M1 1 L6 6.5 L11 1 Z" fill="#a0a0a8"/></svg>
<div class="abs" style="left:1670px;top:215px;width:8px;height:662px;background:#c2c3c9"></div>
<div class="abs" style="left:1688px;top:66px;width:24px;height:839px;background:#eeeeee"></div>
<div class="abs" style="left:1710px;top:66px;width:2px;height:839px;background:#e2e2e2"></div>
<div class="t" style="left:1706px;top:67px;transform-origin:0 0;transform:rotate(90deg)">Diagnostic Tools</div>
<svg style="left:1366px;top:153.0px;width:8px;height:11px" viewBox="0 0 8 11"><path d="M1 0.8 L5.6 5.3 L1 9.8 Z" fill="none" stroke="#1e1e1e" stroke-width="1.2" stroke-linejoin="miter"/></svg>
<svg style="left:1387px;top:150px;width:16px;height:16px" viewBox="0 0 16 16"><path d="M1.6 6 V4.5 Q1.6 3.1 3 3.1 H5.3 Q6.3 3.1 6.8 4 L7.4 5.1 H12.6 Q14.9 5.1 14.9 7.3 V12.4 Q14.9 14.6 12.6 14.6 H3.9 Q1.6 14.6 1.6 12.4 Z M1.6 7.1 H5.5 Q6.6 7.1 7.4 5.1" fill="none" stroke="#bf8000" stroke-width="1.1" stroke-linejoin="round"/></svg>
<div class="t" style="left:1408px;top:151px">.vscode</div>
<svg style="left:1365px;top:173.0px;width:8px;height:8px" viewBox="0 0 8 8"><path d="M7 0.8 V7.2 H0.6 Z" fill="#1e1e1e"/></svg>
<svg style="left:1387px;top:169px;width:16px;height:16px" viewBox="0 0 16 16"><path d="M1.6 6 V4.5 Q1.6 3.1 3 3.1 H5.3 Q6.3 3.1 6.8 4 L7.4 5.1 H12.6 Q14.9 5.1 14.9 7.3 V12.4 Q14.9 14.6 12.6 14.6 H3.9 Q1.6 14.6 1.6 12.4 Z M1.6 7.1 H5.5 Q6.6 7.1 7.4 5.1" fill="none" stroke="#bf8000" stroke-width="1.1" stroke-linejoin="round"/></svg>
<div class="t" style="left:1408px;top:170px">src</div>
<svg style="left:1383px;top:192.0px;width:8px;height:8px" viewBox="0 0 8 8"><path d="M7 0.8 V7.2 H0.6 Z" fill="#1e1e1e"/></svg>
<svg style="left:1405px;top:188px;width:16px;height:16px" viewBox="0 0 16 16"><path d="M1.6 6 V4.5 Q1.6 3.1 3 3.1 H5.3 Q6.3 3.1 6.8 4 L7.4 5.1 H12.6 Q14.9 5.1 14.9 7.3 V12.4 Q14.9 14.6 12.6 14.6 H3.9 Q1.6 14.6 1.6 12.4 Z M1.6 7.1 H5.5 Q6.6 7.1 7.4 5.1" fill="none" stroke="#bf8000" stroke-width="1.1" stroke-linejoin="round"/></svg>
<div class="t" style="left:1426px;top:189px">app</div>
<svg style="left:1401px;top:211.0px;width:8px;height:8px" viewBox="0 0 8 8"><path d="M7 0.8 V7.2 H0.6 Z" fill="#1e1e1e"/></svg>
<svg style="left:1423px;top:207px;width:16px;height:16px" viewBox="0 0 16 16"><path d="M1.6 6 V4.5 Q1.6 3.1 3 3.1 H5.3 Q6.3 3.1 6.8 4 L7.4 5.1 H12.6 Q14.9 5.1 14.9 7.3 V12.4 Q14.9 14.6 12.6 14.6 H3.9 Q1.6 14.6 1.6 12.4 Z M1.6 7.1 H5.5 Q6.6 7.1 7.4 5.1" fill="none" stroke="#bf8000" stroke-width="1.1" stroke-linejoin="round"/></svg>
<div class="t" style="left:1444px;top:208px">assets</div>
<div class="t" style="left:1442px;top:227px;font-size:10.5px;color:#1a70c8;letter-spacing:-0.4px;-webkit-text-stroke:0.2px #1a70c8">TS</div>
<div class="t" style="left:1462px;top:227px">Vintasoft.Barcode.d.ts</div>
<div class="t" style="left:1442px;top:246px;font-size:10.5px;color:#d8561a;letter-spacing:-0.4px;-webkit-text-stroke:0.2px #d8561a">JS</div>
<div class="t" style="left:1462px;top:246px">Vintasoft.Barcode.js</div>
<div class="t" style="left:1442px;top:265px;font-size:10.5px;color:#1a70c8;letter-spacing:-0.4px;-webkit-text-stroke:0.2px #1a70c8">TS</div>
<div class="t" style="left:1462px;top:265px">Vintasoft.Shared.d.ts</div>
<div class="t" style="left:1442px;top:284px;font-size:10.5px;color:#d8561a;letter-spacing:-0.4px;-webkit-text-stroke:0.2px #d8561a">JS</div>
<div class="t" style="left:1462px;top:284px">Vintasoft.Shared.js</div>
<svg style="left:1423px;top:303px;width:16px;height:16px" viewBox="0 0 16 16"><path d="M4.5 1.5 H9.5 L12.5 4.5 V14.5 H4.5 Z" fill="none" stroke="#1e1e1e" stroke-width="1.1" stroke-linejoin="round"/><path d="M9.5 1.5 V4.5 H12.5" fill="none" stroke="#1e1e1e" stroke-width="1"/><path d="M6.5 12.8 C7.5 12.8 8.5 11 10.8 7 L10.5 12.8 M7.8 11 H10.5" fill="none" stroke="#d01020" stroke-width="1.2"/></svg>
<div class="t" style="left:1444px;top:303px">app.component.css</div>
<svg style="left:1423px;top:322px;width:16px;height:16px" viewBox="0 0 16 16"><path d="M5 11 V1.5 H10 L13 4.5 V14.5 H10.5" fill="none" stroke="#1e1e1e" stroke-width="1.1" stroke-linejoin="round"/><path d="M10 1.5 V4.5 H13" fill="none" stroke="#1e1e1e" stroke-width="1"/><path d="M2 12.5 L0.8 14 L2 15.5 M8 12.5 L9.2 14 L8 15.5" fill="none" stroke="#1e1e1e" stroke-width="1"/><circle cx="5" cy="14" r="1.6" fill="#1a6fd0"/></svg>
<div class="t" style="left:1444px;top:322px">app.component.html</div>
<div class="t" style="left:1424px;top:341px;font-size:10.5px;color:#1a70c8;letter-spacing:-0.4px;-webkit-text-stroke:0.2px #1a70c8">TS</div>
<div class="t" style="left:1444px;top:341px">app.component.spec.ts</div>
<div class="t" style="left:1424px;top:360px;font-size:10.5px;color:#1a70c8;letter-spacing:-0.4px;-webkit-text-stroke:0.2px #1a70c8">TS</div>
<div class="t" style="left:1444px;top:360px">app.component.ts</div>
<div class="t" style="left:1424px;top:379px;font-size:10.5px;color:#1a70c8;letter-spacing:-0.4px;-webkit-text-stroke:0.2px #1a70c8">TS</div>
<div class="t" style="left:1444px;top:379px">app.module.ts</div>
<svg style="left:1383px;top:401.0px;width:8px;height:8px" viewBox="0 0 8 8"><path d="M7 0.8 V7.2 H0.6 Z" fill="#1e1e1e"/></svg>
<svg style="left:1405px;top:397px;width:16px;height:16px" viewBox="0 0 16 16"><path d="M1.6 6 V4.5 Q1.6 3.1 3 3.1 H5.3 Q6.3 3.1 6.8 4 L7.4 5.1 H12.6 Q14.9 5.1 14.9 7.3 V12.4 Q14.9 14.6 12.6 14.6 H3.9 Q1.6 14.6 1.6 12.4 Z M1.6 7.1 H5.5 Q6.6 7.1 7.4 5.1" fill="none" stroke="#bf8000" stroke-width="1.1" stroke-linejoin="round"/></svg>
<div class="t" style="left:1426px;top:398px">assets</div>
<svg style="left:1423px;top:417px;width:16px;height:16px" viewBox="0 0 16 16"><path d="M4.5 1.5 H9.5 L12.5 4.5 V14.5 H4.5 Z" fill="none" stroke="#1e1e1e" stroke-width="1.1" stroke-linejoin="round"/><path d="M9.5 1.5 V4.5 H12.5" fill="none" stroke="#1e1e1e" stroke-width="1"/></svg>
<div class="t" style="left:1444px;top:417px">.gitkeep</div>
<svg style="left:1405px;top:436px;width:16px;height:16px" viewBox="0 0 16 16"><path d="M4.5 1.5 H9.5 L12.5 4.5 V14.5 H4.5 Z" fill="none" stroke="#1e1e1e" stroke-width="1.1" stroke-linejoin="round"/><path d="M9.5 1.5 V4.5 H12.5" fill="none" stroke="#1e1e1e" stroke-width="1"/><path d="M6.5 9.5 H10.5 L10 12.5 H7 Z" fill="#1e1e1e"/><circle cx="6.5" cy="7" r="0.5" fill="#1e1e1e"/><circle cx="8.5" cy="7" r="0.5" fill="#1e1e1e"/><circle cx="10.5" cy="7" r="0.5" fill="#1e1e1e"/><circle cx="11" cy="9" r="0.5" fill="#1e1e1e"/><circle cx="11" cy="11" r="0.5" fill="#1e1e1e"/><circle cx="11" cy="13" r="0.5" fill="#1e1e1e"/></svg>
<div class="t" style="left:1426px;top:436px">favicon.ico</div>
<svg style="left:1405px;top:455px;width:16px;height:16px" viewBox="0 0 16 16"><path d="M5 11 V1.5 H10 L13 4.5 V14.5 H10.5" fill="none" stroke="#1e1e1e" stroke-width="1.1" stroke-linejoin="round"/><path d="M10 1.5 V4.5 H13" fill="none" stroke="#1e1e1e" stroke-width="1"/><path d="M2 12.5 L0.8 14 L2 15.5 M8 12.5 L9.2 14 L8 15.5" fill="none" stroke="#1e1e1e" stroke-width="1"/><circle cx="5" cy="14" r="1.6" fill="#1a6fd0"/></svg>
<div class="t" style="left:1426px;top:455px">index.html</div>
<div class="t" style="left:1406px;top:474px;font-size:10.5px;color:#1a70c8;letter-spacing:-0.4px;-webkit-text-stroke:0.2px #1a70c8">TS</div>
<div class="t" style="left:1426px;top:474px">main.ts</div>
<div class="t" style="left:1406px;top:493px;font-size:10.5px;color:#d8561a;letter-spacing:-0.4px;-webkit-text-stroke:0.2px #d8561a">JS</div>
<div class="t" style="left:1426px;top:493px">proxy.conf.js</div>
<svg style="left:1405px;top:512px;width:16px;height:16px" viewBox="0 0 16 16"><path d="M4.5 1.5 H9.5 L12.5 4.5 V14.5 H4.5 Z" fill="none" stroke="#1e1e1e" stroke-width="1.1" stroke-linejoin="round"/><path d="M9.5 1.5 V4.5 H12.5" fill="none" stroke="#1e1e1e" stroke-width="1"/><path d="M6.5 12.8 C7.5 12.8 8.5 11 10.8 7 L10.5 12.8 M7.8 11 H10.5" fill="none" stroke="#d01020" stroke-width="1.2"/></svg>
<div class="t" style="left:1426px;top:512px">styles.css</div>
<svg style="left:1387px;top:531px;width:16px;height:16px" viewBox="0 0 16 16"><path d="M4.5 1.5 H9.5 L12.5 4.5 V14.5 H4.5 Z" fill="none" stroke="#1e1e1e" stroke-width="1.1" stroke-linejoin="round"/><path d="M9.5 1.5 V4.5 H12.5" fill="none" stroke="#1e1e1e" stroke-width="1"/></svg>
<div class="t" style="left:1408px;top:531px">.editorconfig</div>
<svg style="left:1387px;top:550px;width:16px;height:16px" viewBox="0 0 16 16"><path d="M4.5 1.5 H9.5 L12.5 4.5 V14.5 H4.5 Z" fill="none" stroke="#1e1e1e" stroke-width="1.1" stroke-linejoin="round"/><path d="M9.5 1.5 V4.5 H12.5" fill="none" stroke="#1e1e1e" stroke-width="1"/></svg>
<div class="t" style="left:1408px;top:550px">.gitignore</div>
<div class="abs" style="left:1337px;top:567px;width:328px;height:19px;background:#cdcfdc"></div>
<svg style="left:1387px;top:569px;width:16px;height:16px" viewBox="0 0 16 16"><path d="M4.5 7 V1.5 H9.5 L12.5 4.5 V14.5 H9.5" fill="none" stroke="#1e1e1e" stroke-width="1.1" stroke-linejoin="round"/><path d="M9.5 1.5 V4.5 H12.5" fill="none" stroke="#1e1e1e" stroke-width="1"/><path d="M3.2 8.3 C2.3 8.3 2.1 8.8 2.1 9.5 V10.9 C2.1 11.4 1.7 11.8 1 11.8 C1.7 11.8 2.1 12.2 2.1 12.7 V14.1 C2.1 14.8 2.3 15.3 3.2 15.3 M6.8 8.3 C7.7 8.3 7.9 8.8 7.9 9.5 V10.9 C7.9 11.4 8.3 11.8 9 11.8 C8.3 11.8 7.9 12.2 7.9 12.7 V14.1 C7.9 14.8 7.7 15.3 6.8 15.3" fill="none" stroke="#1e1e1e" stroke-width="1"/></svg>
<div class="t" style="left:1408px;top:569px">angular.json</div>
<div class="t" style="left:1388px;top:588px;font-size:10.5px;color:#d8561a;letter-spacing:-0.4px;-webkit-text-stroke:0.2px #d8561a">JS</div>
<div class="t" style="left:1408px;top:588px">aspnetcore-https.js</div>
<svg style="left:1387px;top:607px;width:16px;height:16px" viewBox="0 0 16 16"><path d="M4.5 8.5 V1.5 H9.5 L12.5 4.5 V14.5 H11" fill="none" stroke="#1e1e1e" stroke-width="1.1" stroke-linejoin="round"/><path d="M9.5 1.5 V4.5 H12.5" fill="none" stroke="#1e1e1e" stroke-width="1"/><path d="M1 15.5 V10.8 L3 13.5 L5 10.8 V15.5 M8.3 10 V15 M6.5 13.3 L8.3 15.2 L10.1 13.3" fill="none" stroke="#1e1e1e" stroke-width="1.1"/></svg>
<div class="t" style="left:1408px;top:607px">CHANGELOG.md</div>
<div class="t" style="left:1388px;top:626px;font-size:10.5px;color:#d8561a;letter-spacing:-0.4px;-webkit-text-stroke:0.2px #d8561a">JS</div>
<div class="t" style="left:1408px;top:626px">karma.conf.js</div>
<svg style="left:1366px;top:647.0px;width:8px;height:11px" viewBox="0 0 8 11"><path d="M1 0.8 L5.6 5.3 L1 9.8 Z" fill="none" stroke="#1e1e1e" stroke-width="1.2" stroke-linejoin="miter"/></svg>
<svg style="left:1387px;top:645px;width:16px;height:16px" viewBox="0 0 16 16"><path d="M4.5 7 V1.5 H9.5 L12.5 4.5 V14.5 H9.5" fill="none" stroke="#1e1e1e" stroke-width="1.1" stroke-linejoin="round"/><path d="M9.5 1.5 V4.5 H12.5" fill="none" stroke="#1e1e1e" stroke-width="1"/><path d="M3.2 8.3 C2.3 8.3 2.1 8.8 2.1 9.5 V10.9 C2.1 11.4 1.7 11.8 1 11.8 C1.7 11.8 2.1 12.2 2.1 12.7 V14.1 C2.1 14.8 2.3 15.3 3.2 15.3 M6.8 8.3 C7.7 8.3 7.9 8.8 7.9 9.5 V10.9 C7.9 11.4 8.3 11.8 9 11.8 C8.3 11.8 7.9 12.2 7.9 12.7 V14.1 C7.9 14.8 7.7 15.3 6.8 15.3" fill="none" stroke="#1e1e1e" stroke-width="1"/></svg>
<div class="t" style="left:1408px;top:645px">package.json</div>
<svg style="left:1387px;top:664px;width:16px;height:16px" viewBox="0 0 16 16"><path d="M4.5 8.5 V1.5 H9.5 L12.5 4.5 V14.5 H11" fill="none" stroke="#1e1e1e" stroke-width="1.1" stroke-linejoin="round"/><path d="M9.5 1.5 V4.5 H12.5" fill="none" stroke="#1e1e1e" stroke-width="1"/><path d="M1 15.5 V10.8 L3 13.5 L5 10.8 V15.5 M8.3 10 V15 M6.5 13.3 L8.3 15.2 L10.1 13.3" fill="none" stroke="#1e1e1e" stroke-width="1.1"/></svg>
<div class="t" style="left:1408px;top:664px">README.md</div>
<svg style="left:1366px;top:685.0px;width:8px;height:11px" viewBox="0 0 8 11"><path d="M1 0.8 L5.6 5.3 L1 9.8 Z" fill="none" stroke="#1e1e1e" stroke-width="1.2" stroke-linejoin="miter"/></svg>
<svg style="left:1387px;top:683px;width:16px;height:16px" viewBox="0 0 16 16"><path d="M4.5 7 V1.5 H9.5 L12.5 4.5 V14.5 H9.5" fill="none" stroke="#1e1e1e" stroke-width="1.1" stroke-linejoin="round"/><path d="M9.5 1.5 V4.5 H12.5" fill="none" stroke="#1e1e1e" stroke-width="1"/><path d="M3.2 8.3 C2.3 8.3 2.1 8.8 2.1 9.5 V10.9 C2.1 11.4 1.7 11.8 1 11.8 C1.7 11.8 2.1 12.2 2.1 12.7 V14.1 C2.1 14.8 2.3 15.3 3.2 15.3 M6.8 8.3 C7.7 8.3 7.9 8.8 7.9 9.5 V10.9 C7.9 11.4 8.3 11.8 9 11.8 C8.3 11.8 7.9 12.2 7.9 12.7 V14.1 C7.9 14.8 7.7 15.3 6.8 15.3" fill="none" stroke="#1e1e1e" stroke-width="1"/></svg>
<div class="t" style="left:1408px;top:683px">tsconfig.json</div>
<svg style="left:1347px;top:705.0px;width:8px;height:8px" viewBox="0 0 8 8"><path d="M7 0.8 V7.2 H0.6 Z" fill="#1e1e1e"/></svg>
<svg style="left:1369px;top:702px;width:16px;height:16px" viewBox="0 0 16 16"><path d="M5.5 9 V3 C5.5 2 6 1.5 7 1.5 H13 C14 1.5 14.5 2 14.5 3 V12 C14.5 13 14 13.5 13 13.5 H9 M5.5 5 H14.5" fill="none" stroke="#1e1e1e" stroke-width="1.1"/><circle cx="4.5" cy="11.5" r="3.8" fill="#1a6fd0"/><path d="M0.7 11.5 H8.3 M4.5 7.7 V15.3" stroke="#fff" stroke-width="0.8"/></svg>
<div class="t" style="left:1390px;top:702px">AngularApp1.Server</div>
<svg style="left:1366px;top:723.0px;width:8px;height:11px" viewBox="0 0 8 11"><path d="M1 0.8 L5.6 5.3 L1 9.8 Z" fill="none" stroke="#1e1e1e" stroke-width="1.2" stroke-linejoin="miter"/></svg>
<svg style="left:1387px;top:721px;width:16px;height:16px" viewBox="0 0 16 16"><path d="M3 11 C1 11 0.5 9.5 1 8 C1.5 6.5 3 6 4 6.5 C4.5 4 6.5 2.5 9 3 C11.5 3.5 12.5 5.5 12 7.5" fill="none" stroke="#1a90b0" stroke-width="1.1"/><path d="M6 14 L12 8 M9.5 8.5 L11.5 10.5" stroke="#1a90b0" stroke-width="1.6"/><circle cx="7.5" cy="12.5" r="2" fill="#1a90b0"/></svg>
<div class="t" style="left:1408px;top:721px">Connected Services</div>
<svg style="left:1366px;top:742.0px;width:8px;height:11px" viewBox="0 0 8 11"><path d="M1 0.8 L5.6 5.3 L1 9.8 Z" fill="none" stroke="#1e1e1e" stroke-width="1.2" stroke-linejoin="miter"/></svg>
<svg style="left:1387px;top:740px;width:16px;height:16px" viewBox="0 0 16 16"><rect x="1.5" y="6.5" width="4" height="4" fill="none" stroke="#1e1e1e" stroke-width="1.1"/><rect x="8" y="5" width="6" height="6" rx="1" fill="none" stroke="#1e1e1e" stroke-width="1.1"/><path d="M5.5 8.5 H8 M10 3 V5 M12 3 V5" stroke="#1e1e1e" stroke-width="1"/></svg>
<div class="t" style="left:1408px;top:740px">Dependencies</div>
<svg style="left:1366px;top:761.0px;width:8px;height:11px" viewBox="0 0 8 11"><path d="M1 0.8 L5.6 5.3 L1 9.8 Z" fill="none" stroke="#1e1e1e" stroke-width="1.2" stroke-linejoin="miter"/></svg>
<svg style="left:1387px;top:759px;width:16px;height:16px" viewBox="0 0 16 16"><path d="M3 13 V4 C3 3.5 3.5 3 4 3 H7 L8.5 4.5 H14 C14.5 4.5 15 5 15 5.5 V13 Z" fill="none" stroke="#c08000" stroke-width="1.1"/><path d="M1 14.5 L5.5 10 M4.5 7.5 C4.5 6 6 5.5 7 6 L6 7.5 L7 8.5 L8.5 7.5 C9 9 8 10 6.5 10" fill="none" stroke="#1e1e1e" stroke-width="1.6"/></svg>
<div class="t" style="left:1408px;top:759px">Properties</div>
<svg style="left:1365px;top:781.0px;width:8px;height:8px" viewBox="0 0 8 8"><path d="M7 0.8 V7.2 H0.6 Z" fill="#1e1e1e"/></svg>
<svg style="left:1387px;top:777px;width:16px;height:16px" viewBox="0 0 16 16"><path d="M1.6 6 V4.5 Q1.6 3.1 3 3.1 H5.3 Q6.3 3.1 6.8 4 L7.4 5.1 H12.6 Q14.9 5.1 14.9 7.3 V12.4 Q14.9 14.6 12.6 14.6 H3.9 Q1.6 14.6 1.6 12.4 Z M1.6 7.1 H5.5 Q6.6 7.1 7.4 5.1" fill="none" stroke="#bf8000" stroke-width="1.1" stroke-linejoin="round"/></svg>
<div class="t" style="left:1408px;top:778px">Controllers</div>
<svg style="left:1384px;top:799.0px;width:8px;height:11px" viewBox="0 0 8 11"><path d="M1 0.8 L5.6 5.3 L1 9.8 Z" fill="none" stroke="#1e1e1e" stroke-width="1.2" stroke-linejoin="miter"/></svg>
<div class="t" style="left:1406px;top:797px;font-size:10.5px;font-family:Liberation Mono;color:#138a13;letter-spacing:-0.4px;-webkit-text-stroke:0.15px #138a13">C#</div>
<div class="t" style="left:1426px;top:797px">MyVintasoftBarcodeApiController.cs</div>
<svg style="left:1387px;top:816px;width:16px;height:16px" viewBox="0 0 16 16"><path d="M5.5 8 V3 C5.5 2 6 1.5 7 1.5 H12.5 M10 1.5 V13 C10 14 9.5 14.5 8.5 14.5 H7" fill="none" stroke="#1e1e1e" stroke-width="1.1"/><circle cx="4.5" cy="11" r="3.8" fill="#1a6fd0"/><path d="M0.7 11 H8.3 M4.5 7.2 V14.8" stroke="#fff" stroke-width="0.8"/></svg>
<div class="t" style="left:1408px;top:816px">AngularApp1.Server.http</div>
<svg style="left:1366px;top:837.0px;width:8px;height:11px" viewBox="0 0 8 11"><path d="M1 0.8 L5.6 5.3 L1 9.8 Z" fill="none" stroke="#1e1e1e" stroke-width="1.2" stroke-linejoin="miter"/></svg>
<svg style="left:1387px;top:835px;width:16px;height:16px" viewBox="0 0 16 16"><path d="M4.5 7 V1.5 H9.5 L12.5 4.5 V14.5 H9.5" fill="none" stroke="#1e1e1e" stroke-width="1.1" stroke-linejoin="round"/><path d="M9.5 1.5 V4.5 H12.5" fill="none" stroke="#1e1e1e" stroke-width="1"/><path d="M3.2 8.3 C2.3 8.3 2.1 8.8 2.1 9.5 V10.9 C2.1 11.4 1.7 11.8 1 11.8 C1.7 11.8 2.1 12.2 2.1 12.7 V14.1 C2.1 14.8 2.3 15.3 3.2 15.3 M6.8 8.3 C7.7 8.3 7.9 8.8 7.9 9.5 V10.9 C7.9 11.4 8.3 11.8 9 11.8 C8.3 11.8 7.9 12.2 7.9 12.7 V14.1 C7.9 14.8 7.7 15.3 6.8 15.3" fill="none" stroke="#1e1e1e" stroke-width="1"/></svg>
<div class="t" style="left:1408px;top:835px">appsettings.json</div>
<svg style="left:1387px;top:854px;width:16px;height:16px" viewBox="0 0 16 16"><path d="M4.5 8.5 V1.5 H9.5 L12.5 4.5 V14.5 H11" fill="none" stroke="#1e1e1e" stroke-width="1.1" stroke-linejoin="round"/><path d="M9.5 1.5 V4.5 H12.5" fill="none" stroke="#1e1e1e" stroke-width="1"/><path d="M1 15.5 V10.8 L3 13.5 L5 10.8 V15.5 M8.3 10 V15 M6.5 13.3 L8.3 15.2 L10.1 13.3" fill="none" stroke="#1e1e1e" stroke-width="1.1"/></svg>
<div class="t" style="left:1408px;top:854px">CHANGELOG.md</div>
<div class="t" style="left:1388px;top:873px;font-size:10.5px;font-family:Liberation Mono;color:#138a13;letter-spacing:-0.4px;-webkit-text-stroke:0.15px #138a13">C#</div>
<div class="t" style="left:1408px;top:873px">Program.cs</div>
<div class="abs" style="left:0;top:905px;width:1712px;height:12px;background:#686868"></div>
<div class="abs" style="left:8px;top:909px;width:16px;height:12px;border:1px solid #d0d0d0;border-radius:1px"></div>
<div class="t" style="left:35px;top:909px;color:#fff">Item(s) Saved</div>
<div class="t" style="left:1382px;top:909px;color:#fff">Add to Source Control</div>
<div class="t" style="left:1555px;top:909px;color:#fff">Select Repository</div>
<svg style="left:1360px;top:909px;width:14px;height:10px" viewBox="0 0 14 10"><path d="M7 10 V2 M3 5.5 L7 1.5 L11 5.5" fill="none" stroke="#fff" stroke-width="1.1"/></svg>
<svg style="left:1505px;top:910px;width:12px;height:8px" viewBox="0 0 12 8"><path d="M2 6 L6 2 L10 6" fill="none" stroke="#fff" stroke-width="1.1"/></svg>
<svg style="left:1531px;top:908px;width:16px;height:10px" viewBox="0 0 16 10"><path d="M2 2 H14 M3 2 V10 M13 2 V10 M3 5 H13" fill="none" stroke="#fff" stroke-width="1.1"/></svg>
<svg style="left:1652px;top:910px;width:12px;height:8px" viewBox="0 0 12 8"><path d="M2 6 L6 2 L10 6" fill="none" stroke="#fff" stroke-width="1.1"/></svg>
<svg style="left:1678px;top:908px;width:14px;height:10px" viewBox="0 0 14 10"><circle cx="7" cy="6" r="4" fill="none" stroke="#fff" stroke-width="1.1"/></svg>
<div class="abs" style="left:0;top:0;width:1px;height:917px;background:#5b4fc4"></div>
</body></html>
